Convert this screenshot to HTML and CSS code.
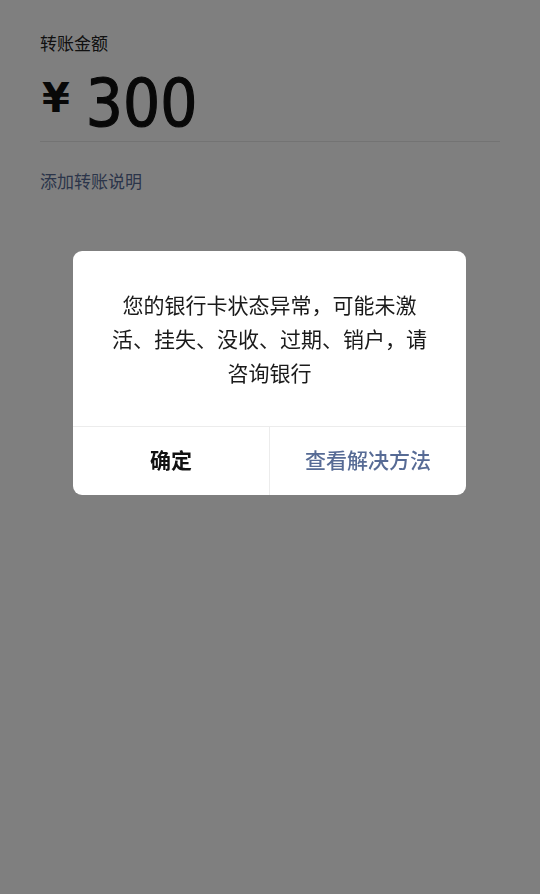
FILE: index.html
```html
<!DOCTYPE html>
<html lang="zh-CN">
<head>
  <meta charset="UTF-8">
  <meta name="viewport" content="width=device-width, initial-scale=1.0">
  <title>转账</title>
  <link rel="stylesheet" href="styles.css">
</head>
<body>
  <div class="page">
    <div class="label">转账金额</div>
    <div class="amount">
      <span class="currency">¥</span>
      <span class="value">300</span>
    </div>
    <div class="note">添加转账说明</div>
  </div>

  <div class="mask">
    <div class="dialog">
      <div class="dialog-body">您的银行卡状态异常，可能未激活、挂失、没收、过期、销户，请咨询银行</div>
      <div class="dialog-footer">
        <button class="btn btn-default">确定</button>
        <button class="btn btn-primary">查看解决方法</button>
      </div>
    </div>
  </div>
</body>
</html>
```

FILE: styles.css
```css
body {
  margin: 0;
  background: #ffffff;
  font-family: "Noto Sans CJK SC", "Noto Sans", sans-serif;
  color: #111111;
}

.page {
  padding: 31px 40px 0;
}

.label {
  font-size: 17px;
  line-height: 24px;
  color: #222222;
}

.amount {
  display: flex;
  align-items: center;
  gap: 16px;
  height: 87px;
  border-bottom: 1px solid #e6e6e6;
  box-sizing: border-box;
}

.currency {
  font-family: "DejaVu Sans", sans-serif;
  font-weight: bold;
  font-size: 40px;
  line-height: 40px;
  padding-left: 2px;
  margin-top: 0;
}

.value {
  font-family: "DejaVu Sans Condensed", "DejaVu Sans", sans-serif;
  font-size: 65px;
  line-height: 64px;
  -webkit-text-stroke: 1.2px #111111;
  margin-top: 12px;
}

.note {
  margin-top: 27px;
  font-size: 17px;
  line-height: 24px;
  color: #576b95;
}

.mask {
  position: fixed;
  top: 0;
  left: 0;
  right: 0;
  bottom: 0;
  background: rgba(0, 0, 0, 0.5);
  display: flex;
  justify-content: flex-start;
  align-items: flex-start;
  padding: 251px 0 0 73px;
}

.dialog {
  width: 393px;
  background: #ffffff;
  border-radius: 9px;
  overflow: hidden;
}

.dialog-body {
  padding: 36px 32px 37px;
  font-size: 21px;
  line-height: 34px;
  text-align: center;
  color: #1a1a1a;
}

.dialog-footer {
  display: flex;
  border-top: 1px solid #ececec;
  height: 68px;
}

.btn {
  flex: 1;
  border: none;
  background: none;
  font-family: inherit;
  font-size: 21px;
  padding: 0 0 5px;
  cursor: pointer;
}

.btn-default {
  font-weight: bold;
  color: #111111;
  border-right: 1px solid #ececec;
}

.btn-primary {
  font-weight: 500;
  color: #576b95;
}
```
